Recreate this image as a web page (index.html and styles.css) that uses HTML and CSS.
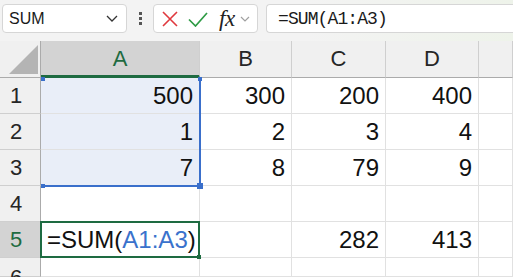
FILE: index.html
```html
<!DOCTYPE html>
<html lang="en">

<head>
    <meta charset="UTF-8">
    <title>SUM</title>
    <link rel="stylesheet" href="styles.css">
</head>

<body>
    <div class="toolbar">
        <div class="namebox">
            <span>SUM</span>
            <svg width="12" height="7" viewBox="0 0 12 7"><path d="M1 1l5 5 5-5" fill="none" stroke="#333" stroke-width="1.3"/></svg>
        </div>
        <div class="grip"><i></i><i></i><i></i></div>
        <div class="fxbox">
            <svg class="cancel" width="16" height="16" viewBox="0 0 16 16"><path d="M1 1l14 14M15 1L1 15" stroke="#e0393e" stroke-width="1.6"/></svg>
            <svg class="enter" width="20" height="15" viewBox="0 0 20 15"><path d="M1 7.5l6.5 6.5L19 1" fill="none" stroke="#2e9b45" stroke-width="1.7"/></svg>
            <span class="fx">fx</span>
            <svg width="10" height="6" viewBox="0 0 10 6"><path d="M1 1l4 4 4-4" fill="none" stroke="#a0a0a0" stroke-width="1.2"/></svg>
        </div>
        <div class="formula">=SUM(A1:A3)</div>
    </div>

    <div class="sheet">
        <div class="corner"><div class="tri"></div></div>
        <div class="colhead active">A</div>
        <div class="colhead">B</div>
        <div class="colhead">C</div>
        <div class="colhead">D</div>
        <div class="colhead"></div>

        <div class="rowhead">1</div>
        <div class="cell sel num">500</div>
        <div class="cell num">300</div>
        <div class="cell num">200</div>
        <div class="cell num">400</div>
        <div class="cell"></div>

        <div class="rowhead">2</div>
        <div class="cell sel num">1</div>
        <div class="cell num">2</div>
        <div class="cell num">3</div>
        <div class="cell num">4</div>
        <div class="cell"></div>

        <div class="rowhead">3</div>
        <div class="cell sel num">7</div>
        <div class="cell num">8</div>
        <div class="cell num">79</div>
        <div class="cell num">9</div>
        <div class="cell"></div>

        <div class="rowhead">4</div>
        <div class="cell"></div>
        <div class="cell"></div>
        <div class="cell"></div>
        <div class="cell"></div>
        <div class="cell"></div>

        <div class="rowhead active">5</div>
        <div class="cell editing">=SUM(<span class="ref">A1:A3</span>)<b class="handle"></b></div>
        <div class="cell"></div>
        <div class="cell num">282</div>
        <div class="cell num">413</div>
        <div class="cell"></div>

        <div class="rowhead last">6</div>
        <div class="cell"></div>
        <div class="cell"></div>
        <div class="cell"></div>
        <div class="cell"></div>
        <div class="cell"></div>

        <!-- range highlight for A1:A3 -->
        <div class="range">
            <b class="knob tl"></b>
            <b class="knob tr"></b>
            <b class="knob bl"></b>
            <b class="knob br"></b>
        </div>
    </div>
</body>

</html>
```

FILE: styles.css
```css
body {
    margin: 0;
    padding: 0;
    width: 513px;
    height: 277px;
    overflow: hidden;
    font-family: 'Liberation Sans', Arial, sans-serif;
    background-color: #fff;
}

/* Formula bar */
.toolbar {
    height: 41px;
    box-sizing: border-box;
    padding: 4px 0 8px 2px;
    display: flex;
    align-items: stretch;
    background: linear-gradient(90deg, #f3f3f3 0%, #f3f3f3 60%, #eef3ea 100%);
}

.namebox {
    width: 125px;
    box-sizing: border-box;
    display: flex;
    align-items: center;
    justify-content: space-between;
    padding: 0 8px 0 6px;
    background-color: #fff;
    border: 1px solid #d6d6d6;
    border-radius: 4px;
    font-size: 16px;
    color: #1a1a1a;
}

.grip {
    width: 26px;
    display: flex;
    flex-direction: column;
    align-items: center;
    justify-content: center;
    gap: 2px;
}

.grip i {
    width: 3px;
    height: 3px;
    background-color: #555;
}

.fxbox {
    width: 105px;
    box-sizing: border-box;
    display: flex;
    align-items: center;
    padding: 0 0 0 8px;
    background-color: #fff;
    border: 1px solid #d6d6d6;
    border-radius: 4px;
}

.fxbox .cancel {
    margin-right: 10px;
}

.fxbox .enter {
    margin-right: 11px;
    margin-top: 1px;
}

.fx {
    font-family: 'Liberation Serif', 'Times New Roman', serif;
    font-style: italic;
    font-size: 23px;
    color: #222;
    margin-right: 5px;
    letter-spacing: -0.5px;
}

.formula {
    flex: 1;
    margin-left: 8px;
    box-sizing: border-box;
    display: flex;
    align-items: center;
    padding-left: 11px;
    background-color: #fff;
    border: 1px solid #d6d6d6;
    border-right: none;
    border-radius: 4px 0 0 4px;
    font-family: 'Liberation Mono', 'Courier New', monospace;
    font-size: 18px;
    letter-spacing: -0.9px;
    color: #1a1a1a;
}

/* Sheet grid */
.sheet {
    position: relative;
    display: grid;
    grid-template-columns: 41px 159px 92px 94px 93px 1fr;
    grid-template-rows: 37px repeat(5, 36px) 19px;
    overflow: hidden;
}

.sheet > div {
    box-sizing: border-box;
}

.corner {
    background-color: #f0f0f0;
    border-right: 1px solid #ababab;
    border-bottom: 1px solid #ababab;
    position: relative;
}

.tri {
    position: absolute;
    left: 9px;
    bottom: 3px;
    width: 29px;
    height: 29px;
    background-color: #b4b4b4;
    clip-path: polygon(100% 0, 100% 100%, 0 100%);
}

.colhead {
    background-color: #f0f0f0;
    border-right: 1px solid #cfcfcf;
    border-bottom: 1px solid #ababab;
    display: flex;
    align-items: center;
    justify-content: center;
    font-size: 22px;
    color: #262626;
}

.colhead.active {
    background-color: #d3d3d3;
    color: #1e6b41;
    border-bottom: 3px solid #1e6b41;
    padding-top: 2px;
}

.rowhead {
    background-color: #f0f0f0;
    border-right: 1px solid #ababab;
    border-bottom: 1px solid #cfcfcf;
    display: flex;
    align-items: center;
    padding-left: 10px;
    font-size: 22px;
    color: #262626;
}

.rowhead.last {
    align-items: flex-start;
    padding-top: 7px;
}

.rowhead.active {
    background-color: #d3d3d3;
    color: #1e6b41;
}

.cell {
    border-right: 1px solid #e1e1e1;
    border-bottom: 1px solid #e1e1e1;
    display: flex;
    align-items: center;
    font-size: 24px;
    color: #111;
    white-space: nowrap;
}

.num {
    justify-content: flex-end;
    padding-right: 6px;
}

.sel {
    background-color: #e9eef8;
}

.editing {
    position: relative;
    border: 2px solid #1e6b41;
    margin-left: -1px;
    margin-top: -1px;
    padding-left: 5px;
}

.ref {
    color: #3a72cc;
}

.handle {
    position: absolute;
    right: -3px;
    bottom: -3px;
    width: 4px;
    height: 4px;
    background-color: #1e6b41;
}

/* absolutely positioned grid child: takes its area from grid-row/column */
.range {
    position: absolute;
    grid-row: 2 / 5;
    grid-column: 2 / 3;
    top: 0;
    left: 0;
    right: -1px;
    bottom: -1px;
    border-right: 2px solid #3a6fcb;
    border-bottom: 2px solid #3a6fcb;
    pointer-events: none;
}

.knob {
    position: absolute;
    width: 4px;
    height: 4px;
    background-color: #3a6fcb;
}

.knob.tl {
    left: 0;
    top: -1px;
}

.knob.tr {
    right: -3px;
    top: -1px;
}

.knob.bl {
    left: 0;
    bottom: -3px;
}

.knob.br {
    right: -4px;
    bottom: -4px;
    width: 6px;
    height: 6px;
}
```
